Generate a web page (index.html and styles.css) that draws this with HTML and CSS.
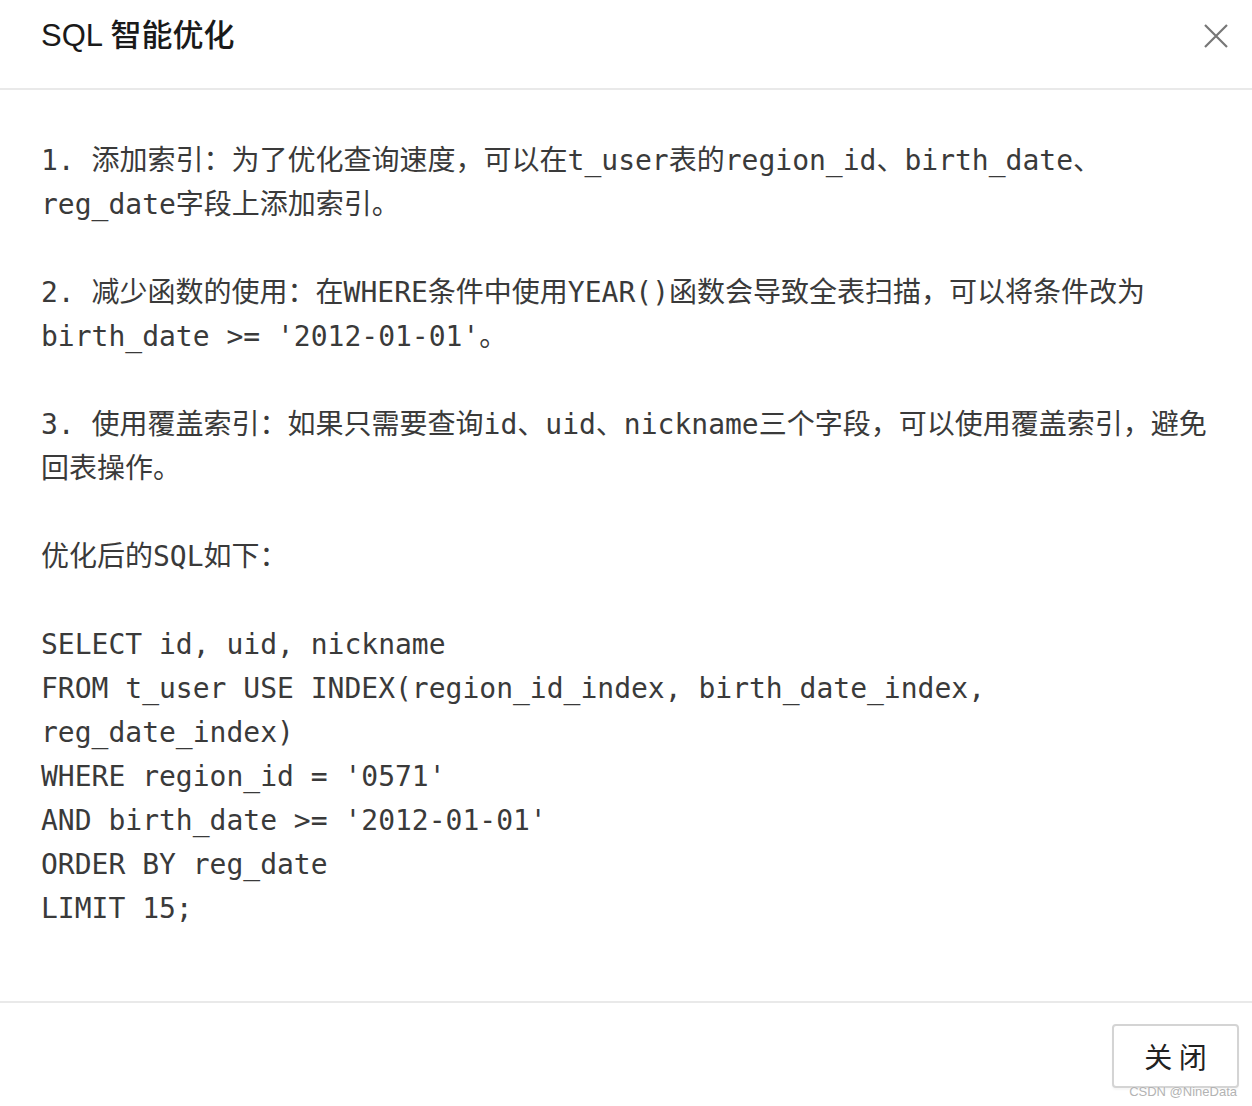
FILE: index.html
```html
<!DOCTYPE html>
<html lang="zh-CN">
<head>
<meta charset="utf-8">
<title>SQL 智能优化</title>
<link rel="stylesheet" href="styles.css">
</head>
<body>
<div class="modal">
  <header class="modal-header">
    <h1 class="modal-title">SQL 智能优化</h1>
    <button class="modal-close" aria-label="关闭">
      <svg width="26" height="26" viewBox="0 0 26 26"><path d="M2 2 L24 24 M24 2 L2 24" stroke="#777" stroke-width="2.2" fill="none"/></svg>
    </button>
  </header>
  <div class="modal-body"><pre class="result">1. 添加索引：为了优化查询速度，可以在t_user表的region_id、birth_date、reg_date字段上添加索引。

2. 减少函数的使用：在WHERE条件中使用YEAR()函数会导致全表扫描，可以将条件改为birth_date &gt;= '2012-01-01'。

3. 使用覆盖索引：如果只需要查询id、uid、nickname三个字段，可以使用覆盖索引，避免回表操作。

优化后的SQL如下：

SELECT id, uid, nickname
FROM t_user USE INDEX(region_id_index, birth_date_index, reg_date_index)
WHERE region_id = '0571'
AND birth_date &gt;= '2012-01-01'
ORDER BY reg_date
LIMIT 15;</pre></div>
  <footer class="modal-footer">
    <button class="btn">关 闭</button>
  </footer>
  <div class="watermark">CSDN @NineData</div>
</div>
</body>
</html>
```

FILE: styles.css
```css
html, body {
  margin: 0;
  padding: 0;
  background: #fff;
}
.modal {
  position: relative;
  width: 1252px;
  height: 1106px;
  background: #fff;
  display: flex;
  flex-direction: column;
}
.modal-header {
  height: 90px;
  flex: none;
  box-sizing: border-box;
  border-bottom: 2px solid #e9e9e9;
  display: flex;
  align-items: flex-start;
  justify-content: space-between;
  padding: 17px 23px 0 41px;
}
.modal-title {
  margin: 0;
  font-family: "Liberation Sans", "Noto Sans CJK SC", sans-serif;
  font-size: 31px;
  font-weight: 500;
  line-height: 38px;
  color: #1a1a1a;
}
.modal-close {
  border: 0;
  background: transparent;
  padding: 0;
  margin-top: 6px;
  width: 26px;
  height: 26px;
  cursor: pointer;
}
.modal-close svg { display: block; }
.modal-body {
  flex: 1;
  padding: 49px 41px 0 41px;
}
.result {
  margin: 0;
  white-space: pre-wrap;
  word-break: normal;
  font-family: "DejaVu Sans Mono", "Noto Sans CJK SC", monospace;
  font-size: 28px;
  line-height: 44px;
  color: #3a3a3a;
}
.modal-footer {
  height: 105px;
  flex: none;
  box-sizing: border-box;
  border-top: 2px solid #e9e9e9;
  display: flex;
  justify-content: flex-end;
  padding: 21px 13px 0 0;
}
.btn {
  width: 127px;
  height: 64px;
  box-sizing: border-box;
  border: 2px solid #d4d4d4;
  border-radius: 4px;
  background: #fff;
  box-shadow: 0 2px 2px rgba(0,0,0,0.04);
  font-family: "Noto Sans CJK SC", sans-serif;
  font-size: 28px;
  color: #222;
  padding: 0;
  cursor: pointer;
}
.watermark {
  position: absolute;
  right: 15px;
  bottom: 7px;
  font-family: "Liberation Sans", sans-serif;
  font-size: 13px;
  line-height: 14px;
  color: #b3b3b3;
  text-shadow: 0 0 2px #fff;
}
```
